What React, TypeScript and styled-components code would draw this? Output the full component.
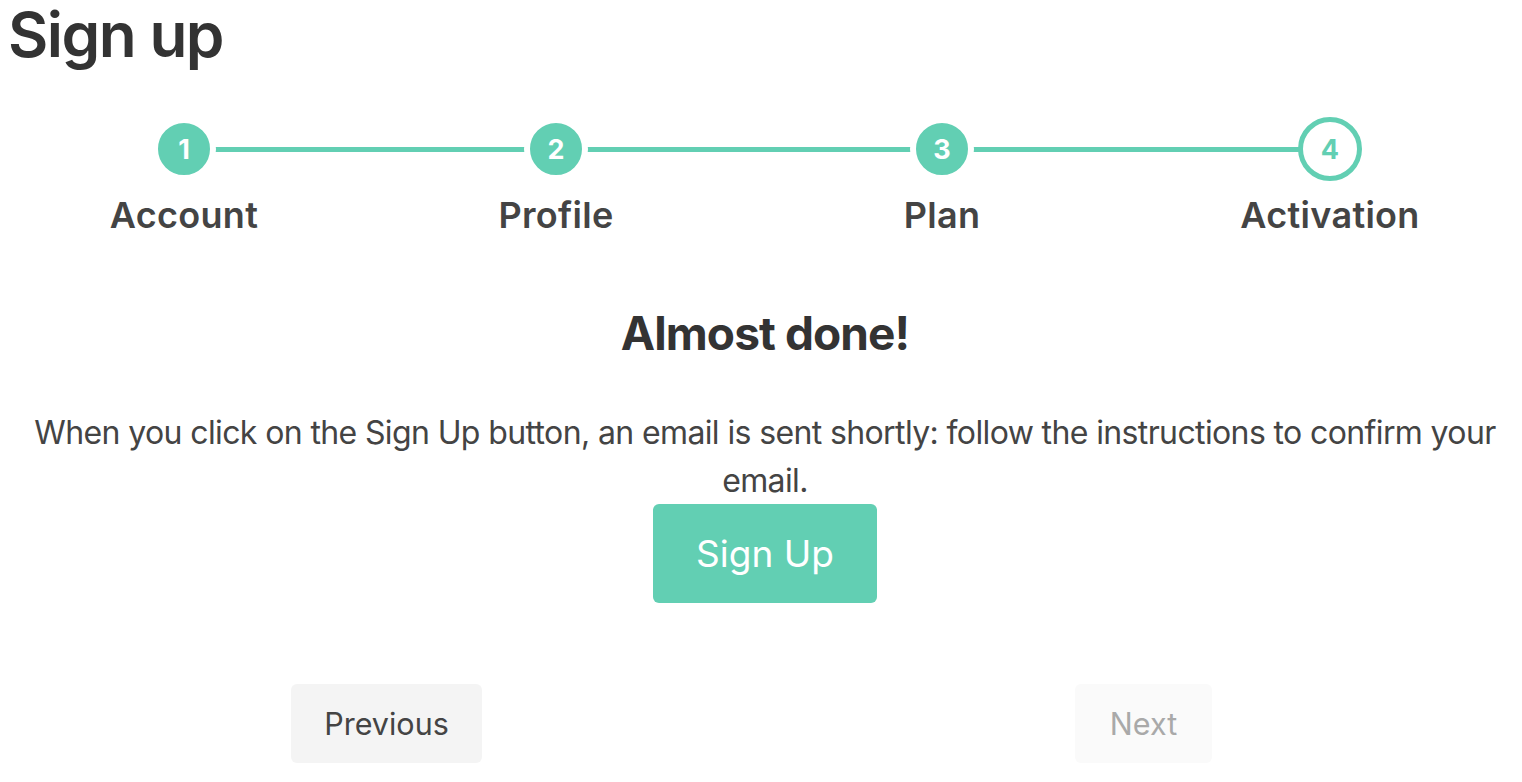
import React from "react";
import styled, { createGlobalStyle } from "styled-components";

const teal = "#62cfb3";

const GlobalStyle = createGlobalStyle`
  html, body {
    margin: 0;
    padding: 0;
    background: #ffffff;
  }
  body {
    font-family: Inter, "Noto Sans", "Liberation Sans", sans-serif;
    color: #444444;
  }
`;

const Page = styled.div`
  padding: 4px 0 0 8px;
  display: flex;
  flex-direction: column;
`;

const Title = styled.h1`
  margin: 0;
  font-size: 62px;
  line-height: 62px;
  font-weight: 600;
  color: #333333;
  letter-spacing: -1.5px;
`;

const Stepper = styled.div`
  display: grid;
  grid-template-columns: 352fr 392fr 380fr 396fr;
  margin: 51px -6px 0 0;
`;

const Step = styled.div<{ $first?: boolean; $last?: boolean }>`
  position: relative;
  display: flex;
  flex-direction: column;
  align-items: center;
  gap: 13px;

  &::before,
  &::after {
    content: "";
    position: absolute;
    top: 30px;
    height: 5px;
    background: ${teal};
  }
  &::before {
    left: 0;
    right: 50%;
    display: ${(p) => (p.$first ? "none" : "block")};
  }
  &::after {
    left: 50%;
    right: 0;
    display: ${(p) => (p.$last ? "none" : "block")};
  }
`;

const Circle = styled.div<{ $active?: boolean }>`
  position: relative;
  z-index: 1;
  box-sizing: border-box;
  width: 64px;
  height: 64px;
  border-radius: 50%;
  display: flex;
  align-items: center;
  justify-content: center;
  font-size: 27px;
  font-weight: 700;
  background: ${(p) => (p.$active ? "#ffffff" : teal)};
  color: ${(p) => (p.$active ? teal : "#ffffff")};
  border: ${(p) => (p.$active ? `5px solid ${teal}` : "6px solid #ffffff")};
`;

const StepLabel = styled.div`
  font-size: 36px;
  line-height: 42px;
  font-weight: 600;
  letter-spacing: 0.3px;
  color: #444444;
`;

const Content = styled.div`
  display: flex;
  flex-direction: column;
  align-items: center;
  text-align: center;
  margin-top: 70px;
`;

const Heading = styled.h2`
  margin: 0;
  font-size: 46px;
  line-height: 55px;
  font-weight: 700;
  letter-spacing: -0.9px;
  color: #333333;
`;

const Text = styled.p`
  margin: 48px 0 0;
  font-size: 32px;
  line-height: 48px;
  letter-spacing: -0.62px;
  color: #444444;
`;

const PrimaryButton = styled.button`
  margin-top: -1px;
  height: 99px;
  padding: 0 43px;
  border: none;
  border-radius: 6px;
  background: ${teal};
  color: #ffffff;
  font-family: inherit;
  font-size: 37px;
  cursor: pointer;
`;

const Nav = styled.div`
  display: grid;
  grid-template-columns: 1fr 1fr;
  margin-top: 81px;
`;

const NavCell = styled.div`
  display: flex;
  justify-content: center;
`;

const NavButton = styled.button<{ $disabled?: boolean }>`
  height: 79px;
  padding: 0 ${(p) => (p.$disabled ? 35 : 33)}px;
  border: none;
  border-radius: 6px;
  font-family: inherit;
  font-size: 30.5px;
  background: ${(p) => (p.$disabled ? "#fafafa" : "#f4f4f4")};
  color: ${(p) => (p.$disabled ? "#a9a9a9" : "#444444")};
  cursor: ${(p) => (p.$disabled ? "default" : "pointer")};
`;

const steps = ["Account", "Profile", "Plan", "Activation"];

export default function App() {
  const current = 3;
  return (
    <>
      <GlobalStyle />
      <Page>
        <Title>Sign up</Title>
        <Stepper>
          {steps.map((label, i) => (
            <Step key={label} $first={i === 0} $last={i === steps.length - 1}>
              <Circle $active={i === current}>{i + 1}</Circle>
              <StepLabel>{label}</StepLabel>
            </Step>
          ))}
        </Stepper>
        <Content>
          <Heading>Almost done!</Heading>
          <Text>
            When you click on the Sign Up button, an email is sent shortly: follow the instructions to confirm your
            email.
          </Text>
          <PrimaryButton>Sign Up</PrimaryButton>
        </Content>
        <Nav>
          <NavCell>
            <NavButton>Previous</NavButton>
          </NavCell>
          <NavCell>
            <NavButton $disabled>Next</NavButton>
          </NavCell>
        </Nav>
      </Page>
    </>
  );
}
